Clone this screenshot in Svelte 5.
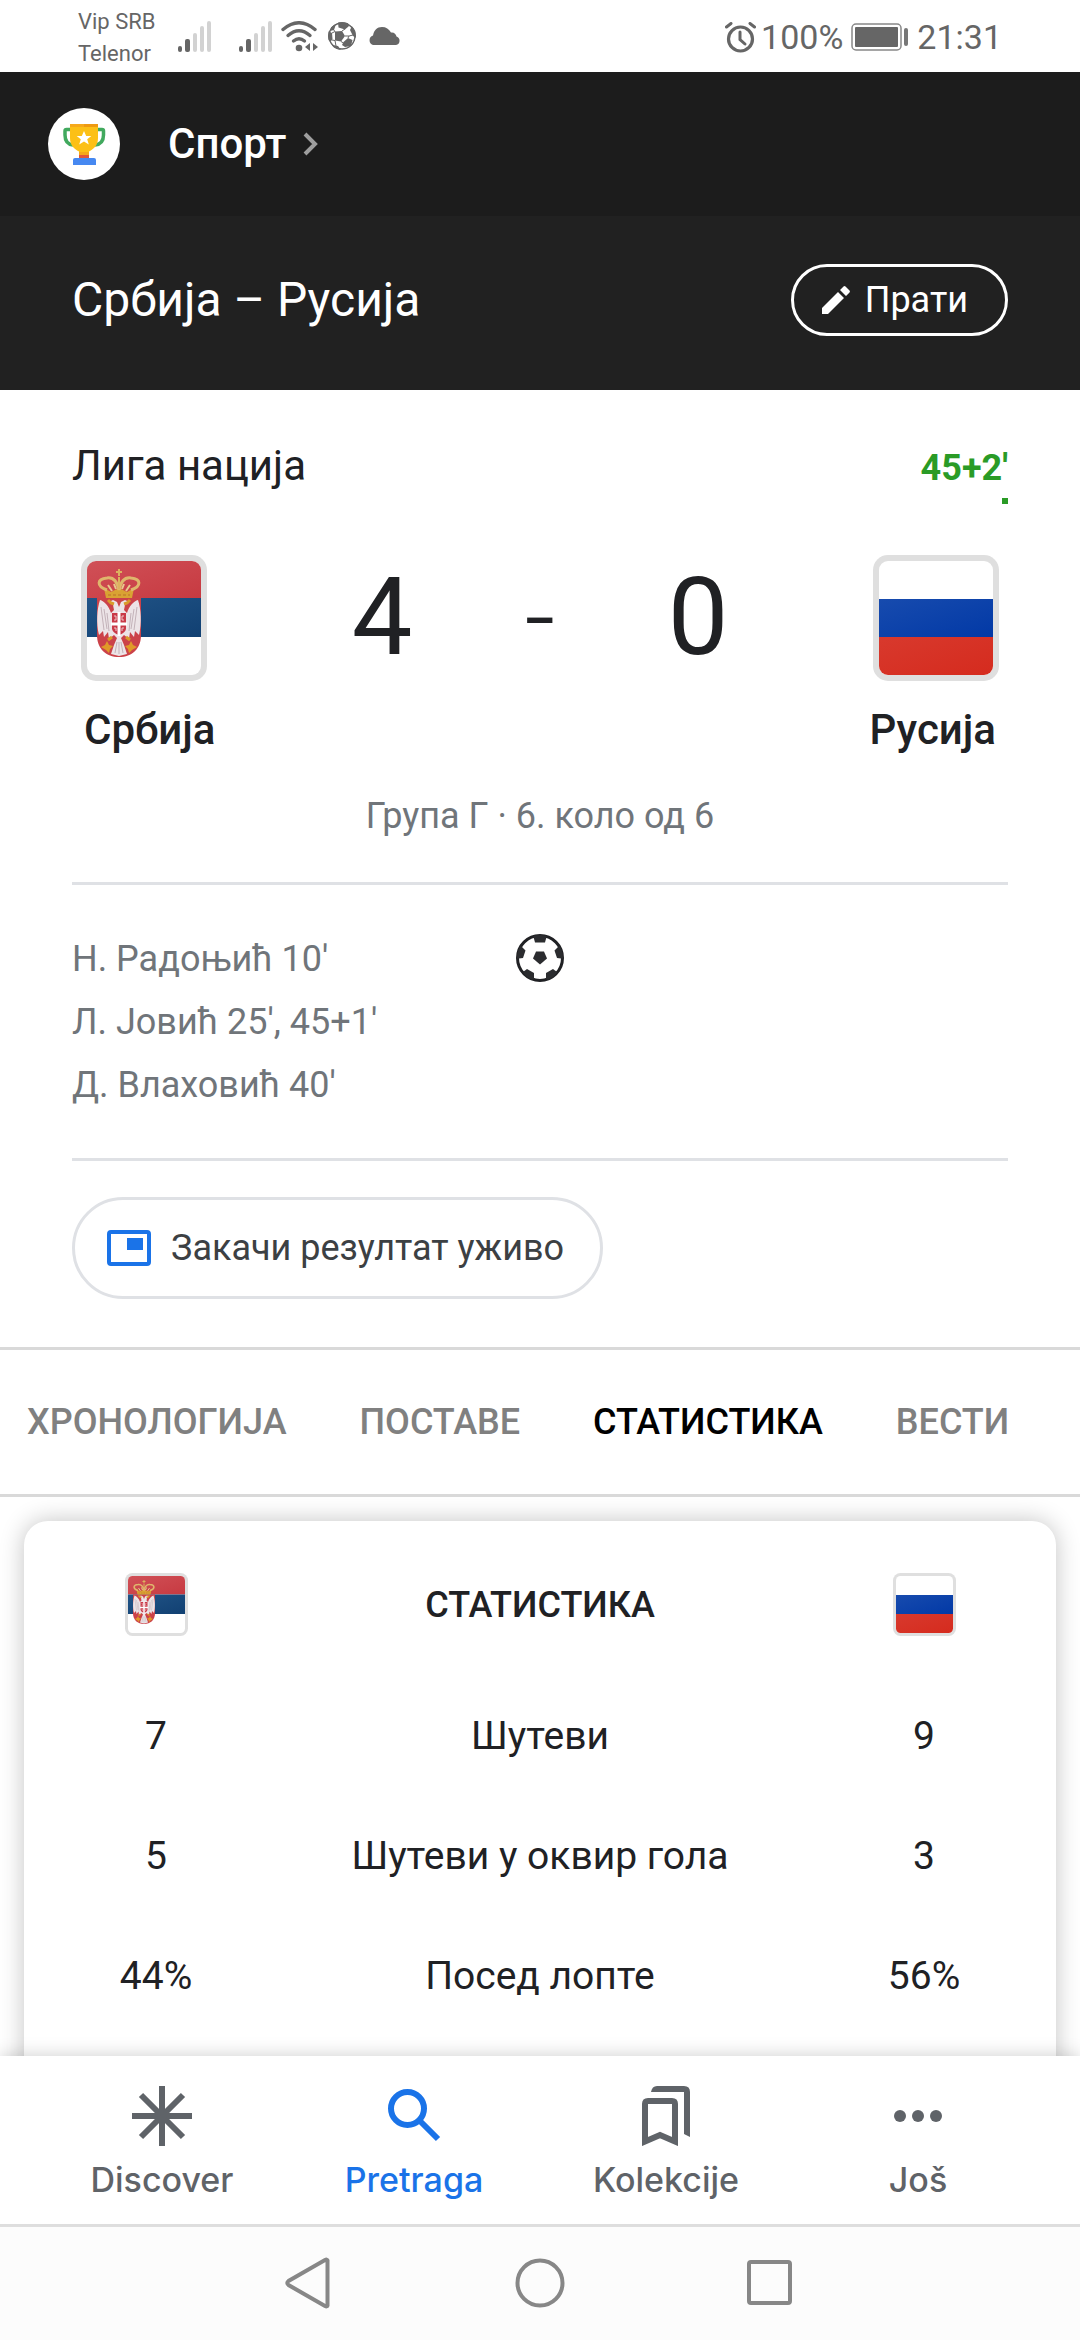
<script>
  const scorers = ["Н. Радоњић 10'", "Л. Јовић 25', 45+1'", "Д. Влаховић 40'"];
  const tabs = ['ХРОНОЛОГИЈА', 'ПОСТАВЕ', 'СТАТИСТИКА', 'ВЕСТИ'];
  const stats = [
    { name: 'Шутеви', home: '7', away: '9' },
    { name: 'Шутеви у оквир гола', home: '5', away: '3' },
    { name: 'Посед лопте', home: '44%', away: '56%' }
  ];
  let activeTab = $state('СТАТИСТИКА');
</script>

{#snippet signal()}
  <svg class="signal" viewBox="0 0 34 31" aria-hidden="true">
    <g fill="#666">
      <rect x="0" y="25" width="4" height="6" rx="2" />
      <rect x="7" y="18" width="5" height="13" rx="2" />
    </g>
    <g fill="#d2d2d2">
      <rect x="15" y="12" width="4" height="19" rx="2" />
      <rect x="22" y="5" width="4" height="26" rx="2" />
      <rect x="29" y="0" width="4" height="31" rx="2" />
    </g>
  </svg>
{/snippet}

{#snippet serbia(id)}
  <svg class="flag" viewBox="0 0 126 126" role="img" aria-label="Застава Србије">
    <defs>
      <clipPath id={`${id}-clip`}><rect x="6" y="6" width="114" height="114" rx="9" /></clipPath>
      <linearGradient id={`${id}-red`} x1="0" y1="0" x2="1" y2="1">
        <stop offset="0" stop-color="#d05057" /><stop offset="1" stop-color="#c73a41" />
      </linearGradient>
      <linearGradient id={`${id}-blue`} x1="0" y1="0" x2="1" y2="1">
        <stop offset="0" stop-color="#215487" /><stop offset="1" stop-color="#114072" />
      </linearGradient>
    </defs>
    <rect width="126" height="126" rx="15" fill="#dfdfdf" />
    <g clip-path={`url(#${id}-clip)`}>
      <rect width="126" height="126" fill="#fff" />
      <rect x="6" y="6" width="114" height="37" fill={`url(#${id}-red)`} />
      <rect x="6" y="43" width="114" height="39" fill={`url(#${id}-blue)`} />
    </g>
    <path d="M16 43H60V80C60 94 51 102 38 102S16 94 16 80Z" fill="#cb4249" />
    <path d="M38 52L36 47L32 45L28 47L32 50L33 55L30 58C28 51 23 46 19 45C16 54 15 68 18 80L22 76L23 82L27 77L28 84L33 80L36 83L33 90L30 99L38 101L46 99L43 90L40 83L43 80L48 84L49 77L53 82L54 76L58 80C61 68 60 54 57 45C53 46 48 51 46 58L43 55L44 50L48 47L44 45L40 47Z" fill="#ece4e7" />
    <path d="M20 52L23 75M23 54L26 74M26 58L28 76M56 52L53 75M53 54L50 74M50 58L48 76M36 87L34 98M38 87V99M40 87L42 98" fill="none" stroke="#c3b2b9" stroke-width="1" />
    <path d="M31 58H45V74Q44 78 38 80Q32 78 31 74Z" fill="#c93a48" />
    <path d="M38 57V81M30 69H46" stroke="#fff" stroke-width="3" />
    <path d="M33 61H35V65H33M43 61H41V65H43M33 73H35V76M43 73H41V76" fill="none" stroke="#eec9cd" stroke-width="1" />
    <path d="M27 45L30 48L33 49M49 45L46 48L43 49M31 82L27 85M45 82L49 85" stroke="#d99a2b" stroke-width="3" fill="none" />
    <path d="M26 86L28 90L32 91L29 94L28 98L25 95L20 92L24 90Z M50 86L48 90L44 91L47 94L48 98L51 95L56 92L52 90Z" fill="#e09a28" />
    <path d="M23 33L30 37L38 33L46 37L53 33L51 43H25Z" fill="#d9a233" />
    <path d="M26 35C15 31 16 24 26 23C32 22 36 26 38 35C40 26 44 22 50 23C60 24 61 31 50 35" fill="none" stroke="#dfb66c" stroke-width="3" />
    <path d="M38 34V22M38 14V21M35 17H41" fill="none" stroke="#dcb25f" stroke-width="2" />
    <path d="M27 30L31 36M49 30L45 36M33 29L35 34M43 29L41 34" stroke="#e8c98d" stroke-width="2" />
    <path d="M27 40H49" stroke="#b9702b" stroke-width="1" stroke-dasharray="3 2" />
  </svg>
{/snippet}

{#snippet russia(id)}
  <svg class="flag" viewBox="0 0 126 126" role="img" aria-label="Застава Русије">
    <defs>
      <clipPath id={`${id}-clip`}><rect x="6" y="6" width="114" height="114" rx="9" /></clipPath>
      <linearGradient id={`${id}-blue`} x1="0" y1="0" x2="1" y2="1">
        <stop offset="0" stop-color="#174bae" /><stop offset="1" stop-color="#0239a6" />
      </linearGradient>
      <linearGradient id={`${id}-red`} x1="0" y1="0" x2="1" y2="1">
        <stop offset="0" stop-color="#d8392d" /><stop offset="1" stop-color="#d52b1e" />
      </linearGradient>
    </defs>
    <rect width="126" height="126" rx="15" fill="#dfdfdf" />
    <g clip-path={`url(#${id}-clip)`}>
      <rect width="126" height="126" fill="#fff" />
      <rect x="6" y="44" width="114" height="38" fill={`url(#${id}-blue)`} />
      <rect x="6" y="82" width="114" height="38" fill={`url(#${id}-red)`} />
    </g>
  </svg>
{/snippet}

<div class="app">
  <div class="status">
    <div class="carriers"><span>Vip SRB</span><span>Telenor</span></div>
    <div class="signals">{@render signal()}{@render signal()}</div>
    <svg class="wifi" viewBox="0 0 37 31" aria-hidden="true">
      <g fill="none" stroke="#666" stroke-width="3.4" stroke-linecap="round">
        <path d="M2 8.500Q18 -5 34 8.500" /><path d="M7 14.500Q18 5 29 14.500" /><path d="M12.500 20Q18 15.500 23.500 20" />
      </g>
      <circle cx="18" cy="27" r="3.300" fill="#666" />
      <path d="M29 22V30L24 26ZM32 22L37 26L32 30Z" fill="#666" />
    </svg>
    <svg class="mini-ball" viewBox="0 0 28 28" aria-hidden="true">
      <defs><clipPath id="mini-clip"><circle cx="14" cy="14" r="14" /></clipPath></defs>
      <g clip-path="url(#mini-clip)">
        <circle cx="14" cy="14" r="13" fill="#fff" stroke="#666" stroke-width="1.500" />
        <g fill="#666">
          <path d="M7 9.500L14 9L17 14L13 19.500L7 18.500Z" />
          <path d="M10 0H20L21 4L17 7.500L10.500 5.500Z" />
          <path d="M24 4L28 8V16L25 14L22 8Z" />
          <path d="M15.500 20L20 16L24.500 18L23 24L17 25L14 23Z" />
          <path d="M0 9L4 11L4.500 17L2.500 20L0 18Z" />
          <path d="M4 23L10 24L13 28H6Z" />
          <path d="M3 5L8 2L6 8L2 9Z" />
        </g>
        <path d="M14 9L17 7M17 14L21 14L20 16M21 14L25 13M13 19.500L15.500 21M7 18.500L4 18M7 18.500L8 24M7 9.500L5 7M7 9.500L4 11" stroke="#666" stroke-width="1" fill="none" />
      </g>
    </svg>
    <svg class="cloud" viewBox="0 0 32 18" aria-hidden="true">
      <path d="M5 18A5 5 0 0 1 5 8.500C6 3 9 0 14 0C18 0 21 2 23 5.500C26 5 28 7 28.500 9.500A4.400 4.400 0 0 1 28 18Z" fill="#666" />
    </svg>
    <div class="status-right">
      <svg class="alarm" viewBox="0 0 31 31" aria-hidden="true">
        <g fill="none" stroke="#666" stroke-linecap="round">
          <circle cx="15.500" cy="17" r="12" stroke-width="3.200" />
          <path d="M1.500 5L6 1.500M29.500 5L25 1.500" stroke-width="3" />
          <path d="M15 10V17.500L20 22" stroke-width="3" />
        </g>
      </svg>
      <span>100%</span>
      <svg class="battery" viewBox="0 0 58 28" aria-hidden="true">
        <rect x="1" y="1" width="49" height="26" rx="4" fill="none" stroke="#888" stroke-width="1.500" />
        <rect x="4" y="4" width="43" height="20" rx="1" fill="#666" />
        <rect x="53" y="5" width="4" height="18" rx="2" fill="#777" />
      </svg>
      <span>21:31</span>
    </div>
  </div>

  <header class="topbar">
    <svg class="trophy" viewBox="0 0 72 72" aria-hidden="true">
      <circle cx="36" cy="36" r="36" fill="#fff" />
      <path d="M24 21.500H18.500Q17 21.500 17 23V27Q17 36 25 37M48 21.500H54Q55.500 21.500 55.500 23V27Q55.500 36 47 37" fill="none" stroke="#41a95e" stroke-width="3.500" />
      <path d="M22 16H50V30C50 37 46 41 41 43.500V47H31V43.500C26 41 22 37 22 30Z" fill="#fcc016" />
      <path d="M22 16H36V19H22Z" fill="#f6a91b" /><path d="M36 16H50V19H36Z" fill="#ee9a12" />
      <path d="M31 44H41V47H31Z" fill="#f5a81b" /><path d="M31 47H41V50H31Z" fill="#e2553a" />
      <path d="M36 23L38.200 28H43.300L39.200 31.300L40.800 36.500L36 33.400L31.200 36.500L32.800 31.300L28.700 28H33.800Z" fill="#fff" />
      <path d="M25 57V52Q25 50 27 50H46Q48 50 48 52V57Z" fill="#4688f1" />
    </svg>
    <a class="crumb" href="#sport">
      Спорт
      <svg viewBox="0 0 16 24" aria-hidden="true"><path d="M2 2L12 12L2 22" fill="none" stroke="#9e9e9e" stroke-width="4" /></svg>
    </a>
  </header>

  <div class="titlebar">
    <h1>Србија – Русија</h1>
    <button class="follow" type="button">
      <svg viewBox="0 0 28 28" aria-hidden="true">
        <path d="M0 22L16 6L22 12L6 28H0ZM18 4L21.500 .500Q22.500 -.300 23.500 .500L27.500 4.500Q28.300 5.500 27.500 6.500L24 10Z" fill="#fff" />
      </svg>
      Прати
    </button>
  </div>

  <main>
    <section class="match">
      <div class="league">
        <span class="league-name">Лига нација</span>
        <div class="live"><span>45+2'</span><i></i></div>
      </div>
      <div class="teams">
        <div class="team">{@render serbia('home-large')}<strong>Србија</strong></div>
        <div class="score"><span>4</span><span class="dash">-</span><span>0</span></div>
        <div class="team away">{@render russia('away-large')}<strong>Русија</strong></div>
      </div>
      <p class="round">Група Г · 6. коло од 6</p>
      <div class="goals">
        <ul>
          {#each scorers as scorer}<li>{scorer}</li>{/each}
        </ul>
        <svg class="ball" viewBox="0 0 48 48" role="img" aria-label="Голови">
          <defs><clipPath id="ball-clip"><circle cx="24" cy="24" r="23" /></clipPath></defs>
          <circle cx="24" cy="24" r="22.500" fill="#fff" stroke="#202124" stroke-width="3" />
          <g fill="#2b2c2f" clip-path="url(#ball-clip)">
            <path d="M20 17.500H28L31 24.500L24 30.500L17 24.500Z" />
            <path d="M17 1H31L29 8.500H19Z" />
            <path d="M0 14L5 12L9.500 16.500L7 24L0 25Z" />
            <path d="M48 14L43 12L38.500 16.500L41 24L48 25Z" />
            <path d="M7 38L11 35L18 39V45L13 47Z" />
            <path d="M41 38L37 35L30 39V45L35 47Z" />
          </g>
        </svg>
      </div>
      <button class="pin" type="button">
        <svg viewBox="0 0 44 36" aria-hidden="true">
          <rect x="2" y="2" width="40" height="32" rx="2" fill="none" stroke="#1a73e8" stroke-width="4" />
          <rect x="20" y="8" width="16" height="12" fill="#1a73e8" />
        </svg>
        Закачи резултат уживо
      </button>
    </section>

    <div class="tabs" role="tablist">
      {#each tabs as tab}
        <button type="button" role="tab" aria-selected={tab === activeTab} class:active={tab === activeTab} onclick={() => (activeTab = tab)}>{tab}</button>
      {/each}
    </div>

    <section class="card">
      <table>
        <thead>
          <tr><th>{@render serbia('home-small')}</th><th>СТАТИСТИКА</th><th>{@render russia('away-small')}</th></tr>
        </thead>
        <tbody>
          {#each stats as stat}
            <tr><td>{stat.home}</td><td>{stat.name}</td><td>{stat.away}</td></tr>
          {/each}
        </tbody>
      </table>
    </section>
  </main>

  <nav class="bottom">
    <a href="#discover">
      <svg viewBox="0 0 60 60" aria-hidden="true">
        <path d="M30 0V60M0 30H60M9 9L51 51M51 9L9 51" stroke="#5f6368" stroke-width="6" />
      </svg>
      Discover
    </a>
    <a href="#search" class="current" aria-current="page">
      <svg viewBox="0 0 60 60" aria-hidden="true">
        <circle cx="23.500" cy="22.500" r="16.500" fill="none" stroke="#1a73e8" stroke-width="6" />
        <path d="M35 34L54 53" stroke="#1a73e8" stroke-width="6" />
      </svg>
      Pretraga
    </a>
    <a href="#collections">
      <svg viewBox="0 0 60 60" aria-hidden="true">
        <path d="M9 55.500V18Q9 15 12 15H36Q39 15 39 18V55.500L24 49Z" fill="none" stroke="#5f6368" stroke-width="6" />
        <path d="M15 6Q16 0 21 0H48Q54 0 54 6V51L48 48V6Z" fill="#5f6368" />
      </svg>
      Kolekcije
    </a>
    <a href="#more">
      <svg viewBox="0 0 60 60" aria-hidden="true">
        <g fill="#5f6368"><circle cx="12" cy="30" r="6" /><circle cx="30" cy="30" r="6" /><circle cx="48" cy="30" r="6" /></g>
      </svg>
      Još
    </a>
  </nav>

  <div class="system">
    <button type="button" aria-label="Nazad">
      <svg viewBox="0 0 54 54"><path d="M44.500 4.500V49.500Q44 51 42 50L5.500 29Q3 27 5.500 25L42 4Q44 3 44.500 4.500Z" fill="none" stroke="#878787" stroke-width="4" /></svg>
    </button>
    <button type="button" aria-label="Početna">
      <svg viewBox="0 0 54 54"><circle cx="27" cy="27" r="22.500" fill="none" stroke="#878787" stroke-width="4" /></svg>
    </button>
    <button type="button" aria-label="Nedavno">
      <svg viewBox="0 0 54 54"><rect x="6" y="6" width="41" height="41" rx="2" fill="none" stroke="#878787" stroke-width="4" /></svg>
    </button>
  </div>
</div>

<style>
  :global(body) { margin: 0; background: #fff; }
  .app {
    display: flex; flex-direction: column; height: 100vh; overflow: hidden;
    font-family: Roboto, "Noto Sans", sans-serif; color: #202124; background: #fff;
  }
  svg { display: block; flex: none; }
  button { font: inherit; color: inherit; background: none; border: 0; padding: 0; cursor: pointer; }
  a { color: inherit; text-decoration: none; }

  .status { display: flex; align-items: center; flex: none; height: 72px; padding: 0 78px; color: #666; box-sizing: border-box; }
  .carriers { display: flex; flex-direction: column; padding-top: 3px; font-size: 22px; line-height: 32px; width: 100px; }
  .signals { display: flex; gap: 27px; }
  .signal { width: 34px; height: 31px; }
  .wifi { width: 37px; height: 31px; margin-left: 8px; }
  .mini-ball { width: 28px; height: 28px; margin-left: 10px; }
  .cloud { width: 32px; height: 18px; margin-left: 12px; }
  .status-right { display: flex; align-items: center; margin-left: auto; padding-top: 2px; font-size: 34px; line-height: 42px; }
  .alarm { width: 31px; height: 31px; margin-right: 5px; }
  .battery { width: 58px; height: 28px; margin: 0 8px; }

  .topbar { display: flex; align-items: center; gap: 48px; flex: none; height: 144px; padding: 0 48px; background: #1c1c1c; color: #fff; }
  .trophy { width: 72px; height: 72px; }
  .crumb { display: flex; align-items: center; gap: 17px; font-size: 42px; line-height: 48px; font-weight: 500; }
  .crumb svg { width: 16px; height: 24px; }

  .titlebar { display: flex; align-items: center; justify-content: space-between; flex: none; padding: 48px 72px 54px; background: #212121; color: #fff; }
  h1 { margin: 0; font-size: 48px; line-height: 54px; font-weight: 400; }
  .follow { display: flex; align-items: center; gap: 15px; height: 72px; padding: 0 37px 0 28px; border: 3px solid #fff; border-radius: 36px; font-size: 36px; line-height: 42px; }
  .follow svg { width: 28px; height: 28px; }

  main { flex: 1; min-height: 0; overflow: hidden; }
  .match { padding: 52px 72px 48px; }
  .league { display: flex; justify-content: space-between; align-items: baseline; }
  .league-name { font-size: 42px; line-height: 48px; }
  .live { display: flex; flex-direction: column; align-items: flex-end; gap: 9px; color: #2a9b26; font-size: 36px; line-height: 42px; font-weight: 700; }
  .live i { width: 6px; height: 6px; background: #2a9b26; }

  .teams { display: grid; grid-template-columns: 1fr auto 1fr; margin-top: 51px; padding: 0 9px; }
  .team { display: flex; flex-direction: column; align-items: flex-start; gap: 25px; }
  .away { align-items: flex-end; }
  .team .flag { width: 126px; height: 126px; }
  .team strong { padding: 0 3px; font-size: 42px; line-height: 48px; font-weight: 500; }
  .score { display: grid; grid-template-columns: repeat(3, 158px); align-items: baseline; justify-items: center; align-content: start; padding-top: 8px; font-size: 108px; line-height: 108px; }
  .dash { font-weight: 300; }

  .round { margin: 41px 0 0; padding-bottom: 45px; border-bottom: 3px solid #dfe1e5; text-align: center; font-size: 36px; line-height: 42px; color: #70757a; }
  .goals { display: grid; grid-template-columns: 1fr auto 1fr; padding: 43px 0 41px; border-bottom: 3px solid #dfe1e5; color: #70757a; }
  ul { list-style: none; margin: 0; padding: 0; font-size: 36px; line-height: 63px; }
  .ball { width: 48px; height: 48px; margin-top: 6px; }
  .pin { display: flex; align-items: center; gap: 20px; height: 102px; margin-top: 36px; padding: 0 36px 0 32px; border: 3px solid #dfe1e5; border-radius: 51px; color: #3c4043; font-size: 36px; line-height: 42px; }
  .pin svg { width: 44px; height: 36px; }

  .tabs { display: flex; gap: 73px; height: 144px; padding: 0 27px; border: solid #d9d9d9; border-width: 3px 0; overflow: hidden; }
  .tabs button { flex: none; font-size: 36px; font-weight: 500; line-height: 42px; color: #808080; }
  .tabs .active { color: #000; }

  .card { margin: 24px 24px 0; padding-bottom: 120px; border-radius: 24px; background: #fff; box-shadow: 0 0 24px rgba(0, 0, 0, 0.24); }
  table { width: 100%; table-layout: fixed; border-collapse: collapse; text-align: center; }
  th { padding: 52px 0 40px; font-size: 36px; line-height: 42px; font-weight: 500; }
  th:first-child, th:last-child { width: 264px; }
  th .flag { width: 63px; height: 63px; margin: 0 auto; }
  td { height: 120px; padding: 0; font-size: 39px; line-height: 48px; }

  .bottom { position: relative; z-index: 1; display: grid; grid-template-columns: repeat(4, 1fr); flex: none; padding: 30px 36px 23px; background: #fff; border-bottom: 3px solid #dedede; box-shadow: 0 0 18px rgba(0, 0, 0, 0.2); }
  .bottom a { display: flex; flex-direction: column; align-items: center; gap: 13px; font-family: Inter, Roboto, sans-serif; font-size: 34px; line-height: 42px; font-weight: 500; color: #5f6368; }
  .bottom .current { color: #1a73e8; }
  .bottom svg { width: 60px; height: 60px; }

  .system { position: relative; z-index: 1; display: flex; justify-content: center; align-items: center; gap: 176px; flex: none; height: 113px; padding-bottom: 2px; box-sizing: border-box; background: #fcfcfc; }
  .system svg { width: 54px; height: 54px; }
</style>
